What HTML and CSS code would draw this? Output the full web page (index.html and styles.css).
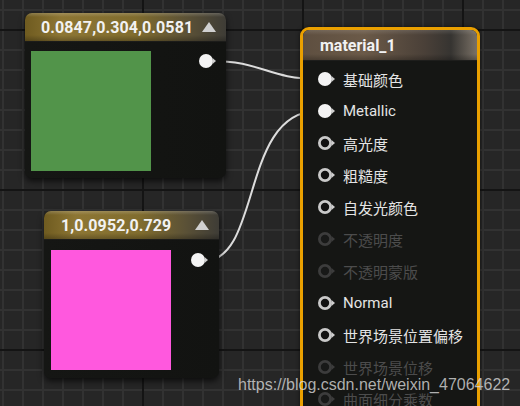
FILE: index.html
```html
<!DOCTYPE html>
<html>
<head>
<meta charset="utf-8">
<link rel="stylesheet" href="styles.css">
</head>
<body>
<div class="canvas">
  <svg class="wires" width="520" height="406" viewBox="0 0 520 406">
    <path d="M211,61 C262,61 268,79 318,79" />
    <path d="M204,261 C262,261 240,111 318,111" />
  </svg>

  <div class="node const node-a">
    <div class="head">
      <span class="title">0.0847,0.304,0.0581</span>
      <svg class="collapse" width="14" height="10" viewBox="0 0 14 10"><polygon points="7,0 14,10 0,10"/></svg>
    </div>
    <div class="body">
      <div class="swatch green"></div>
      <svg class="pin out" width="20" height="16" viewBox="0 0 20 16"><circle cx="8" cy="8" r="7" class="fill"/><polygon points="14.5,5 18,8 14.5,11" class="tri"/></svg>
    </div>
  </div>

  <div class="node const node-b">
    <div class="head">
      <span class="title">1,0.0952,0.729</span>
      <svg class="collapse" width="14" height="10" viewBox="0 0 14 10"><polygon points="7,0 14,10 0,10"/></svg>
    </div>
    <div class="body">
      <div class="swatch pink"></div>
      <svg class="pin out" width="20" height="16" viewBox="0 0 20 16"><circle cx="8" cy="8" r="7" class="fill"/><polygon points="14.5,5 18,8 14.5,11" class="tri"/></svg>
    </div>
  </div>

  <div class="material">
    <div class="mhead">material_1</div>
    <div class="rows">
      <div class="row"><svg class="pin" width="20" height="16" viewBox="0 0 20 16"><circle cx="8" cy="8" r="7" class="fill"/><polygon points="14.5,5 18,8 14.5,11" class="tri"/></svg><span>基础颜色</span></div>
      <div class="row"><svg class="pin" width="20" height="16" viewBox="0 0 20 16"><circle cx="8" cy="8" r="7" class="fill"/><polygon points="14.5,5 18,8 14.5,11" class="tri"/></svg><span>Metallic</span></div>
      <div class="row"><svg class="pin" width="20" height="16" viewBox="0 0 20 16"><circle cx="8" cy="8" r="5.6" class="ring"/><polygon points="14.5,5 18,8 14.5,11" class="tri"/></svg><span>高光度</span></div>
      <div class="row"><svg class="pin" width="20" height="16" viewBox="0 0 20 16"><circle cx="8" cy="8" r="5.6" class="ring"/><polygon points="14.5,5 18,8 14.5,11" class="tri"/></svg><span>粗糙度</span></div>
      <div class="row"><svg class="pin" width="20" height="16" viewBox="0 0 20 16"><circle cx="8" cy="8" r="5.6" class="ring"/><polygon points="14.5,5 18,8 14.5,11" class="tri"/></svg><span>自发光颜色</span></div>
      <div class="row off"><svg class="pin" width="20" height="16" viewBox="0 0 20 16"><circle cx="8" cy="8" r="5.6" class="ring"/><polygon points="14.5,5 18,8 14.5,11" class="tri"/></svg><span>不透明度</span></div>
      <div class="row off"><svg class="pin" width="20" height="16" viewBox="0 0 20 16"><circle cx="8" cy="8" r="5.6" class="ring"/><polygon points="14.5,5 18,8 14.5,11" class="tri"/></svg><span>不透明蒙版</span></div>
      <div class="row"><svg class="pin" width="20" height="16" viewBox="0 0 20 16"><circle cx="8" cy="8" r="5.6" class="ring"/><polygon points="14.5,5 18,8 14.5,11" class="tri"/></svg><span>Normal</span></div>
      <div class="row"><svg class="pin" width="20" height="16" viewBox="0 0 20 16"><circle cx="8" cy="8" r="5.6" class="ring"/><polygon points="14.5,5 18,8 14.5,11" class="tri"/></svg><span>世界场景位置偏移</span></div>
      <div class="row off"><svg class="pin" width="20" height="16" viewBox="0 0 20 16"><circle cx="8" cy="8" r="5.6" class="ring"/><polygon points="14.5,5 18,8 14.5,11" class="tri"/></svg><span>世界场景位移</span></div>
      <div class="row off"><svg class="pin" width="20" height="16" viewBox="0 0 20 16"><circle cx="8" cy="8" r="5.6" class="ring"/><polygon points="14.5,5 18,8 14.5,11" class="tri"/></svg><span>曲面细分乘数</span></div>
    </div>
  </div>

  <div class="watermark">https://blog.csdn.net/weixin_47064622</div>
</div>
</body>
</html>
```
FILE: styles.css
```css
html, body {
  margin: 0;
  padding: 0;
  background: #262626;
}
.canvas {
  position: relative;
  width: 520px;
  height: 406px;
  overflow: hidden;
  font-family: Roboto, "Noto Sans CJK SC", sans-serif;
  background-color: #262626;
  background-image:
    linear-gradient(to right, #141414 2px, transparent 2px),
    linear-gradient(to bottom, #141414 2px, transparent 2px),
    linear-gradient(to right, #323232 2px, transparent 2px),
    linear-gradient(to bottom, #323232 2px, transparent 2px);
  background-size: 160px 160px, 160px 160px, 20px 20px, 20px 20px;
  background-position: 142px 0, 0 29px, 2px 0, 0 9px;
}
.wires {
  position: absolute;
  left: 0;
  top: 0;
  z-index: 1;
}
.wires path {
  fill: none;
  stroke: #dcdcdc;
  stroke-width: 2;
}
.node {
  position: absolute;
  z-index: 2;
  border-radius: 7px;
  background: #141513;
  box-shadow: 0 3px 6px rgba(0,0,0,0.7);
  overflow: hidden;
  display: flex;
  flex-direction: column;
}
.node-a { left: 25px; top: 13px; width: 201px; height: 165px; }
.node-b { left: 44px; top: 211px; width: 175px; height: 167px; }
.head {
  height: 28px;
  flex: none;
  display: flex;
  align-items: center;
  justify-content: space-between;
  padding: 0 10px 0 16px;
  background:
    linear-gradient(to bottom, rgba(255,255,255,0.18) 0, rgba(255,255,255,0) 4px, rgba(0,0,0,0) 22px, rgba(0,0,0,0.25) 28px),
    linear-gradient(to right, #6f5b20 0%, #8d7634 18%, #806c2e 55%, #5c5236 80%, #3e3c36 100%);
  border-bottom: 1px solid #1c1c1a;
}
.node-b .head { padding-left: 17px; }
.title {
  color: #f2f2f2;
  font-weight: 700;
  font-size: 16px;
  letter-spacing: 0.1px;
}
.collapse polygon { fill: #d0d0d0; }
.body {
  flex: 1;
  display: flex;
  align-items: flex-start;
  justify-content: space-between;
  padding: 9px 8px 0 6px;
  background: linear-gradient(to right, #151614, #121311);
}
.node-b .body { padding: 10px 9px 0 7px; }
.swatch { width: 120px; height: 120px; }
.green { background: #52944a; }
.pin.out { margin-top: 2px; }
.pink { background: #ff58de; }
.pin .fill { fill: #f4f4f4; }
.pin .ring { fill: #111; stroke: #c9c9c9; stroke-width: 2.8; }
.pin .tri { fill: #cfcfcf; }
.material {
  position: absolute;
  z-index: 2;
  left: 300px;
  top: 27px;
  width: 174px;
  height: 420px;
  border: 3px solid #eaa000;
  border-radius: 9px;
  background: #151614;
  box-shadow: 0 0 4px rgba(0,0,0,0.6);
  display: flex;
  flex-direction: column;
  overflow: hidden;
}
.mhead {
  height: 30px;
  flex: none;
  display: flex;
  align-items: center;
  padding-left: 17px;
  color: #f2f2f2;
  font-weight: 700;
  font-size: 16px;
  background:
    linear-gradient(to bottom, rgba(255,255,255,0.12) 0, rgba(255,255,255,0) 5px, rgba(0,0,0,0) 24px, rgba(0,0,0,0.25) 30px),
    linear-gradient(to right, #5e4f40 0%, #6b5a48 35%, #4a4038 70%, #363431 85%, #7a7166 100%);
  border-bottom: 1px solid #1e1e1c;
}
.rows {
  display: flex;
  flex-direction: column;
  padding-top: 2px;
}
.row {
  height: 32px;
  display: flex;
  align-items: center;
  gap: 6px;
  padding-left: 14px;
  color: #e4e4e4;
  font-size: 15px;
}
.row.off { color: #4c4c4c; }
.row.off .ring { stroke: #3c3c3c; fill: #181918; }
.row.off .tri { fill: #3c3c3c; }
.watermark {
  position: absolute;
  z-index: 3;
  left: 238px;
  top: 376px;
  font-family: "Liberation Sans", Arial, sans-serif;
  font-size: 16px;
  color: rgba(220,220,220,0.78);
}
```
